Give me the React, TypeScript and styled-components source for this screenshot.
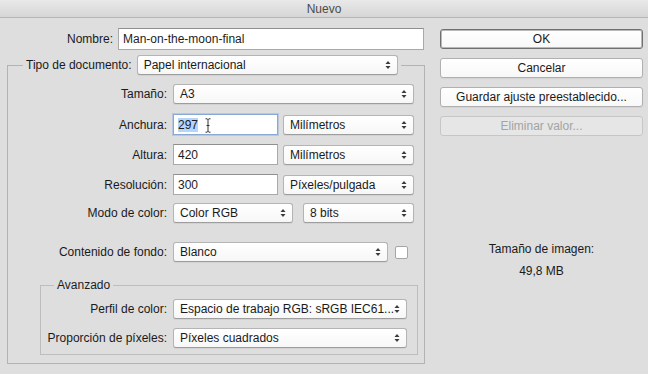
import React from 'react';
import styled, { createGlobalStyle, css } from 'styled-components';

const GlobalStyle = createGlobalStyle`
  html, body {
    margin: 0;
    padding: 0;
    background: #dedede;
  }
  body {
    font-family: "Liberation Sans", Arial, sans-serif;
    font-size: 12px;
    color: #1d1d1d;
  }
`;

const Window = styled.div`
  width: 648px;
  height: 374px;
  background: #dedede;
  display: flex;
  flex-direction: column;
  overflow: hidden;
`;

const TitleBar = styled.div`
  height: 18px;
  flex-shrink: 0;
  box-sizing: border-box;
  display: flex;
  align-items: center;
  justify-content: center;
  padding-top: 1px;
  background: linear-gradient(#e9e9e9, #d6d6d6);
  border-bottom: 1px solid #b6b6b6;
  color: #4b4b4b;
  font-size: 12px;
`;

const Body = styled.div`
  display: flex;
  gap: 15px;
  padding: 10px 5px 0 7px;
`;

const LeftCol = styled.div`
  width: 418px;
  display: flex;
  flex-direction: column;
`;

const RightCol = styled.div`
  width: 203px;
  display: flex;
  flex-direction: column;
  padding-top: 1px;
`;

const NameRow = styled.div`
  display: flex;
  align-items: center;
  gap: 5px;
`;

const Label = styled.span<{ $w?: number }>`
  width: ${({ $w }) => ($w ? `${$w}px` : 'auto')};
  flex-shrink: 0;
  text-align: right;
  white-space: nowrap;
  color: #1a1a1a;
`;

const TextField = styled.div<{ $w: number; $h?: number; $focus?: boolean }>`
  position: relative;
  width: ${({ $w }) => $w}px;
  height: ${({ $h }) => $h ?? 21}px;
  box-sizing: border-box;
  background: #fff;
  border: 1px solid #a9a9a9;
  border-top-color: #8f8f8f;
  padding-left: 4px;
  display: flex;
  align-items: center;
  white-space: nowrap;
  ${({ $focus }) =>
    $focus &&
    css`
      border-color: #86a9d6;
      box-shadow: 0 0 0 1px rgba(120, 160, 215, 0.35);
    `}
`;

const Selected = styled.span`
  background: #b5d5fb;
`;

const Caret = styled.svg`
  position: absolute;
  left: 31px;
  top: 3px;
`;

const Popup = styled.div<{ $w: number }>`
  position: relative;
  width: ${({ $w }) => $w}px;
  height: 20px;
  box-sizing: border-box;
  padding: 0 18px 0 6px;
  display: flex;
  align-items: center;
  white-space: nowrap;
  overflow: hidden;
  background: linear-gradient(#ffffff, #f7f7f7);
  border: 1px solid #b4b4b4;
  border-bottom-color: #9d9d9d;
  border-radius: 3px;
  box-shadow: 0 1px 1px rgba(0, 0, 0, 0.06);
  color: #1a1a1a;
`;

const Arrows = styled.svg`
  position: absolute;
  right: 6px;
  top: 50%;
  margin-top: -5px;
`;

const Check = styled.div`
  width: 13px;
  height: 13px;
  box-sizing: border-box;
  background: #fff;
  border: 1px solid #a6a6a6;
  border-radius: 2px;
`;

const Group = styled.fieldset<{ $inner?: boolean }>`
  margin: ${({ $inner }) => ($inner ? '15px 6px 8px 32px' : '5px 0 0 0')};
  padding: 0;
  border: 1px solid ${({ $inner }) => ($inner ? '#bdbdbd' : '#b3b3b3')};
  min-width: 0;
`;

const Legend = styled.legend<{ $ml?: number }>`
  margin-left: ${({ $ml }) => $ml ?? 13}px;
  padding: 0 3px;
  display: flex;
  align-items: center;
  gap: 5px;
  line-height: 16px;
`;

const GroupBody = styled.div<{ $top: number; $bottom?: number }>`
  display: flex;
  flex-direction: column;
  padding-top: ${({ $top }) => $top}px;
  padding-bottom: ${({ $bottom }) => $bottom ?? 0}px;
`;

const Row = styled.div<{ $mt?: number }>`
  display: flex;
  align-items: center;
  gap: 6px;
  margin-top: ${({ $mt }) => $mt ?? 0}px;
`;

const Controls = styled.div<{ $gap?: number }>`
  display: flex;
  align-items: center;
  gap: ${({ $gap }) => $gap ?? 5}px;
`;

const Button = styled.div<{ $default?: boolean; $disabled?: boolean }>`
  height: 20px;
  box-sizing: border-box;
  display: flex;
  align-items: center;
  justify-content: center;
  background: linear-gradient(#ffffff, #f8f8f8);
  border: 1px solid #b0b0b0;
  border-radius: 3px;
  color: #1a1a1a;
  box-shadow: 0 1px 1px rgba(0, 0, 0, 0.05);
  ${({ $default }) =>
    $default &&
    css`
      border-color: #707070;
      box-shadow: inset 0 0 0 1px #b9b9b9;
    `}
  ${({ $disabled }) =>
    $disabled &&
    css`
      background: #e6e6e6;
      border-color: #c6c6c6;
      color: #a3a3a3;
      box-shadow: none;
    `}
`;

const Buttons = styled.div`
  display: flex;
  flex-direction: column;
  gap: 9px;
`;

const Info = styled.div`
  margin-top: 105px;
  display: flex;
  flex-direction: column;
  align-items: center;
  gap: 6px;
  line-height: 16px;
  color: #1a1a1a;
`;

const UpDown = () => (
  <Arrows width="6" height="10" viewBox="0 0 6 10">
    <path d="M0.5 4 L3 1 L5.5 4 Z" fill="#3a3a3a" />
    <path d="M0.5 6 L3 9 L5.5 6 Z" fill="#3a3a3a" />
  </Arrows>
);

const Select: React.FC<{ w: number; children: React.ReactNode }> = ({ w, children }) => (
  <Popup $w={w}>
    {children}
    <UpDown />
  </Popup>
);

const App: React.FC = () => {
  return (
    <>
      <GlobalStyle />
      <Window>
        <TitleBar>Nuevo</TitleBar>
        <Body>
          <LeftCol>
            <NameRow>
              <Label $w={106}>Nombre:</Label>
              <TextField $w={306} $h={22}>Man-on-the-moon-final</TextField>
            </NameRow>

            <Group>
              <Legend $ml={15}>
                <Label>Tipo de documento:</Label>
                <Select w={261}>Papel internacional</Select>
              </Legend>
              <GroupBody $top={9}>
                <Row>
                  <Label $w={159}>Tamaño:</Label>
                  <Select w={241}>A3</Select>
                </Row>
                <Row $mt={10}>
                  <Label $w={159}>Anchura:</Label>
                  <Controls $gap={5}>
                    <TextField $w={105} $focus>
                      <Selected>297</Selected>
                      <Caret width="6" height="15" viewBox="0 0 6 15">
                        <path
                          d="M0.5 0.8 H2.2 L3 1.8 L3.8 0.8 H5.5 M3 1.8 V13.2 M0.5 14.2 H2.2 L3 13.2 L3.8 14.2 H5.5 M1.5 7.5 H4.5"
                          stroke="#333"
                          strokeWidth="1"
                          fill="none"
                        />
                      </Caret>
                    </TextField>
                    <Select w={131}>Milímetros</Select>
                  </Controls>
                </Row>
                <Row $mt={9}>
                  <Label $w={159}>Altura:</Label>
                  <Controls $gap={5}>
                    <TextField $w={105}>420</TextField>
                    <Select w={131}>Milímetros</Select>
                  </Controls>
                </Row>
                <Row $mt={9}>
                  <Label $w={159}>Resolución:</Label>
                  <Controls $gap={5}>
                    <TextField $w={105}>300</TextField>
                    <Select w={131}>Píxeles/pulgada</Select>
                  </Controls>
                </Row>
                <Row $mt={8}>
                  <Label $w={159}>Modo de color:</Label>
                  <Controls $gap={10}>
                    <Select w={120}>Color RGB</Select>
                    <Select w={111}>8 bits</Select>
                  </Controls>
                </Row>
                <Row $mt={19}>
                  <Label $w={159}>Contenido de fondo:</Label>
                  <Controls $gap={7}>
                    <Select w={215}>Blanco</Select>
                    <Check />
                  </Controls>
                </Row>

                <Group $inner>
                  <Legend>Avanzado</Legend>
                  <GroupBody $top={6} $bottom={6}>
                    <Row>
                      <Label $w={126}>Perfil de color:</Label>
                      <Select w={234}>Espacio de trabajo RGB: sRGB IEC61...</Select>
                    </Row>
                    <Row $mt={9}>
                      <Label $w={126}>Proporción de píxeles:</Label>
                      <Select w={234}>Píxeles cuadrados</Select>
                    </Row>
                  </GroupBody>
                </Group>
              </GroupBody>
            </Group>
          </LeftCol>

          <RightCol>
            <Buttons>
              <Button $default>OK</Button>
              <Button>Cancelar</Button>
              <Button>Guardar ajuste preestablecido...</Button>
              <Button $disabled>Eliminar valor...</Button>
            </Buttons>
            <Info>
              <span>Tamaño de imagen:</span>
              <span>49,8 MB</span>
            </Info>
          </RightCol>
        </Body>
      </Window>
    </>
  );
};

export default App;
